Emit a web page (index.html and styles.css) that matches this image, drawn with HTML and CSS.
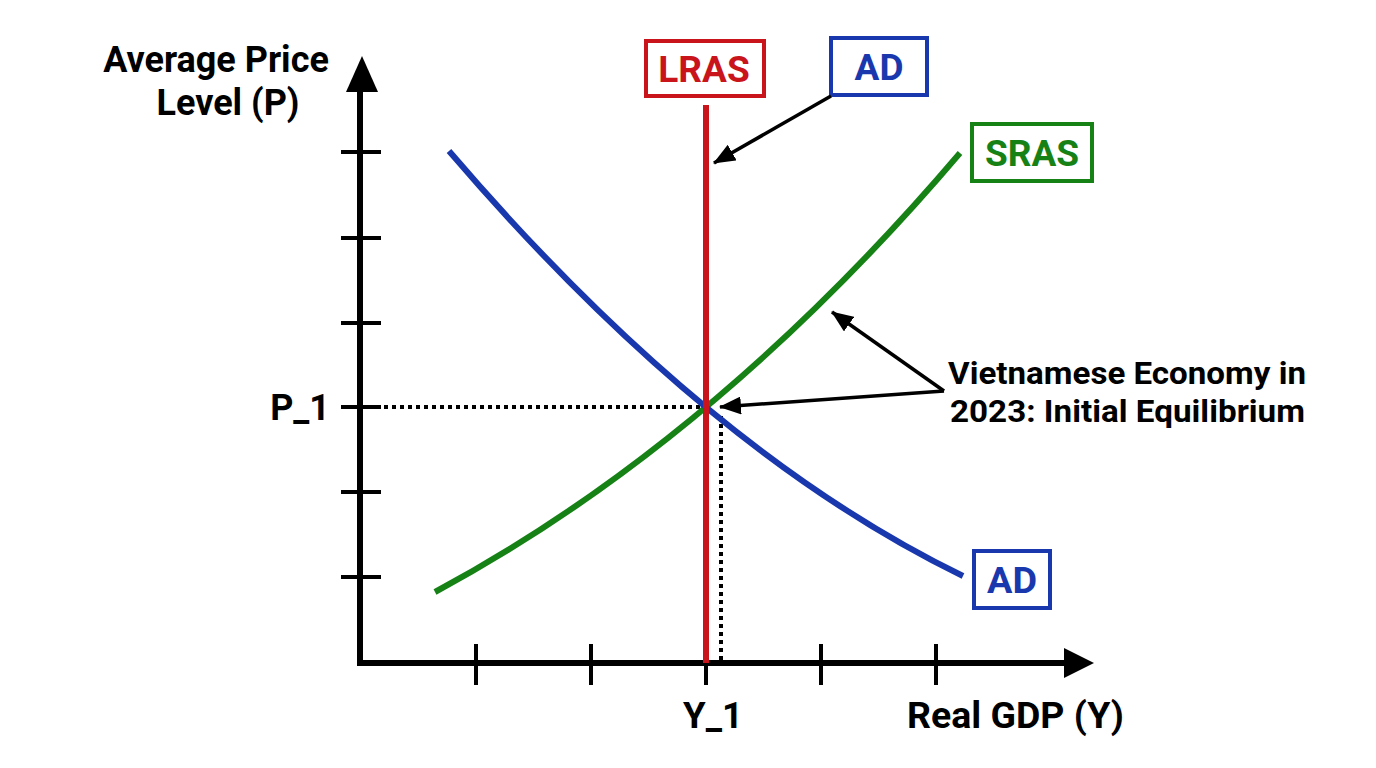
FILE: index.html
```html
<!DOCTYPE html>
<html lang="en">
<head>
<meta charset="utf-8">
<title>AD-AS Diagram</title>
<link rel="stylesheet" href="styles.css">
</head>
<body>
<div class="canvas">
<svg class="chart" width="1376" height="768" viewBox="0 0 1376 768" xmlns="http://www.w3.org/2000/svg">
  <defs>
    <marker id="ah" markerWidth="22" markerHeight="18" refX="21" refY="9" orient="auto" markerUnits="userSpaceOnUse" viewBox="0 0 22 18">
      <path d="M0,0 L22,9 L0,18 Z" fill="#000"/>
    </marker>
  </defs>

  <!-- axis labels -->
  <text class="axis-title" x="216" y="72" text-anchor="middle">Average Price</text>
  <text class="axis-title" x="228" y="115" text-anchor="middle">Level (P)</text>

  <!-- dotted guides -->
  <line class="dots" x1="384" y1="407" x2="704" y2="407"/>
  <line class="dots" x1="721" y1="416" x2="721" y2="660"/>

  <!-- y ticks -->
  <g class="tick">
    <line x1="341" y1="152" x2="381" y2="152"/>
    <line x1="341" y1="238" x2="381" y2="238"/>
    <line x1="341" y1="323" x2="381" y2="323"/>
    <line x1="341" y1="407" x2="381" y2="407"/>
    <line x1="341" y1="492" x2="381" y2="492"/>
    <line x1="341" y1="577" x2="381" y2="577"/>
  </g>
  <!-- x ticks -->
  <g class="tick">
    <line x1="476" y1="644" x2="476" y2="685"/>
    <line x1="591" y1="644" x2="591" y2="685"/>
    <line x1="706" y1="644" x2="706" y2="685"/>
    <line x1="821" y1="644" x2="821" y2="685"/>
    <line x1="936" y1="644" x2="936" y2="685"/>
  </g>

  <!-- axes -->
  <polyline class="axis" points="360,88 360,663 1068,663"/>
  <path d="M362,56 L378,92 L346,92 Z" fill="#000"/>
  <path d="M1094,663 L1064,648 L1064,678 Z" fill="#000"/>

  <!-- curves -->
  <path class="sras" d="M435,592 Q714,442 960,153"/>
  <path class="ad" d="M449,151 Q706,451 963,576"/>
  <line class="lras" x1="706" y1="105" x2="706" y2="663"/>

  <!-- LRAS label -->
  <rect class="box box-red" x="646" y="41" width="118" height="55"/>
  <text class="lbl lbl-red" x="704" y="82" text-anchor="middle">LRAS</text>

  <!-- AD top label -->
  <rect class="box box-blue" x="831" y="38" width="96" height="57"/>
  <text class="lbl lbl-blue" x="879" y="80" text-anchor="middle">AD</text>
  <line class="arrow" x1="831" y1="96" x2="714" y2="163" marker-end="url(#ah)"/>

  <!-- SRAS label -->
  <rect class="box box-green" x="972" y="124" width="120" height="57"/>
  <text class="lbl lbl-green" x="1032" y="166" text-anchor="middle">SRAS</text>

  <!-- AD bottom label -->
  <rect class="box box-blue" x="974" y="551" width="76" height="57"/>
  <text class="lbl lbl-blue" x="1012" y="593" text-anchor="middle" textLength="50" lengthAdjust="spacingAndGlyphs">AD</text>

  <!-- annotation -->
  <line class="arrow" x1="944" y1="391" x2="832" y2="312" marker-end="url(#ah)"/>
  <line class="arrow" x1="944" y1="391" x2="720" y2="407" marker-end="url(#ah)"/>
  <text class="note" x="948" y="384" textLength="358" lengthAdjust="spacingAndGlyphs">Vietnamese Economy in</text>
  <text class="note" x="950" y="422" textLength="355" lengthAdjust="spacingAndGlyphs">2023: Initial Equilibrium</text>

  <!-- value labels -->
  <text class="val" x="330" y="420" text-anchor="end">P_1</text>
  <text class="val" x="713" y="728" text-anchor="middle" textLength="60" lengthAdjust="spacingAndGlyphs">Y_1</text>
  <text class="val" x="907" y="728" textLength="217" lengthAdjust="spacingAndGlyphs">Real GDP (Y)</text>
</svg>
</div>
</body>
</html>
```

FILE: styles.css
```css
html, body {
  margin: 0;
  padding: 0;
  background: #ffffff;
}

.canvas {
  width: 1376px;
  height: 768px;
  overflow: hidden;
}

.chart {
  display: block;
  font-family: Roboto, "Liberation Sans", sans-serif;
  font-weight: 700;
}

.axis-title {
  font-size: 36px;
  fill: #000;
}

.val {
  font-size: 36px;
  fill: #000;
}

.note {
  font-size: 31px;
  fill: #000;
}

.lbl {
  font-size: 37px;
}

.lbl-red { fill: #c8141a; }
.lbl-blue { fill: #1a38ae; }
.lbl-green { fill: #168216; }

.box {
  fill: #fff;
  stroke-width: 4;
}
.box-red { stroke: #c8141a; }
.box-blue { stroke: #1a38ae; }
.box-green { stroke: #168216; }

.axis {
  fill: none;
  stroke: #000;
  stroke-width: 6;
}

.tick line {
  stroke: #000;
  stroke-width: 4;
}

.dots {
  stroke: #000;
  stroke-width: 4;
  stroke-dasharray: 4 4;
}

.ad {
  fill: none;
  stroke: #1a38ae;
  stroke-width: 6;
}

.sras {
  fill: none;
  stroke: #168216;
  stroke-width: 6;
}

.lras {
  stroke: #c8141a;
  stroke-width: 6;
}

.arrow {
  stroke: #000;
  stroke-width: 3.5;
}
```
